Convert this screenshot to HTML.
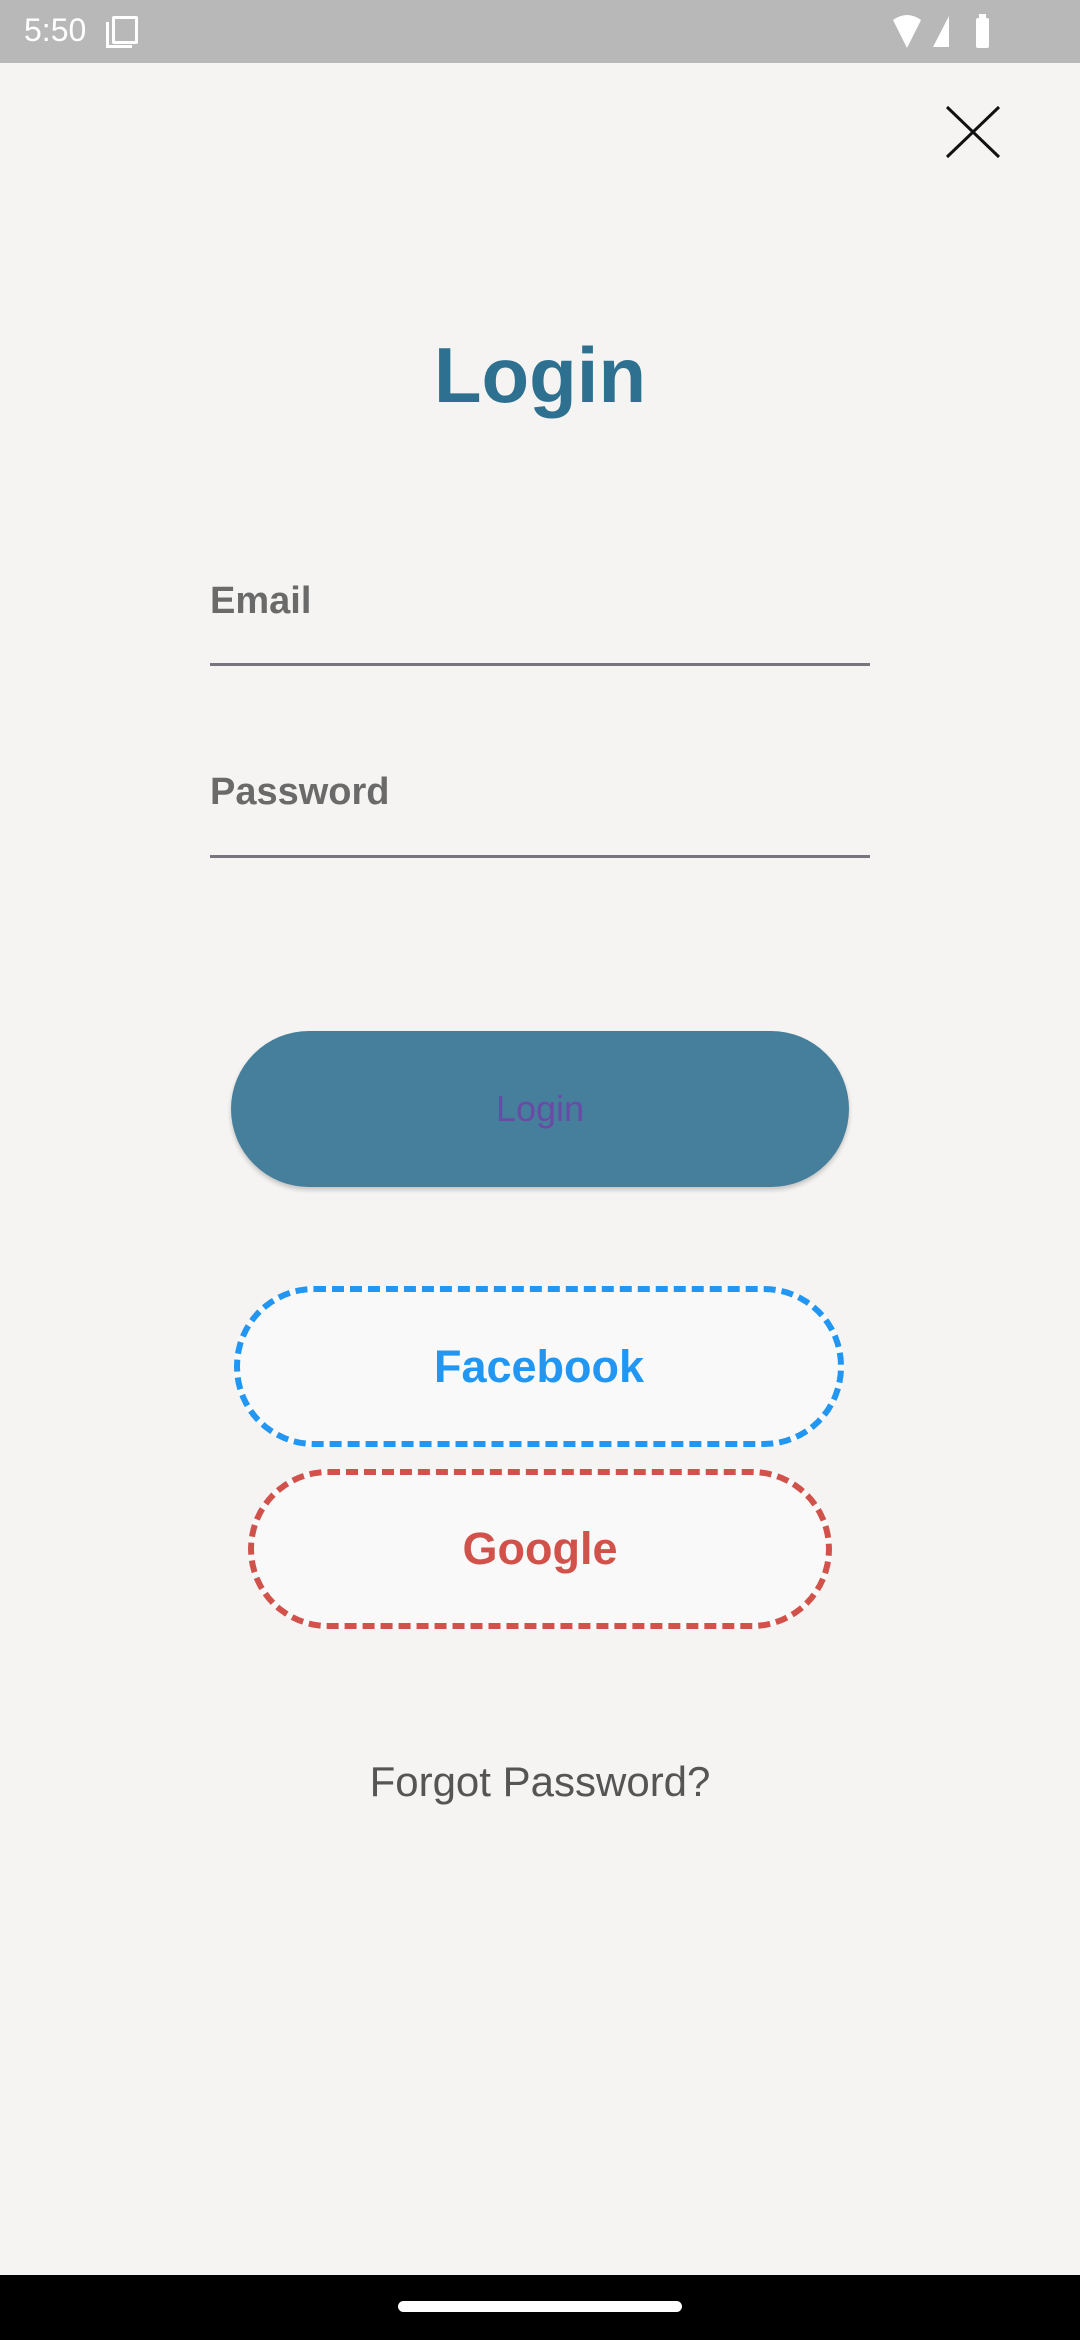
<!DOCTYPE html>
<html><head><meta charset="utf-8"><style>
*{margin:0;padding:0;box-sizing:border-box}
body{width:1080px;height:2340px;background:#f5f4f2;position:relative;overflow:hidden;font-family:"Liberation Sans",sans-serif}
.sb{position:absolute;left:0;top:0;width:1080px;height:63px;background:#b9b8b9;color:#fff}
.abs{position:absolute}
.lbl{position:absolute;left:210px;font-size:38px;color:#5c5c5c;font-weight:bold;opacity:.9}
.line{position:absolute;left:210px;width:660px;height:3px;background:#77767f}
.btn{position:absolute;border-radius:80px;display:flex;align-items:center;justify-content:center;font-weight:bold}
</style></head><body>
<div class="sb">
<div class="abs" style="left:24px;top:12px;font-size:32px">5:50</div>
<div class="abs" style="left:112px;top:16px;width:26px;height:28px;border:3px solid #fff;border-radius:2px"></div>
<div class="abs" style="left:106px;top:22px;width:26px;height:26px;border-left:3px solid #fff;border-bottom:3px solid #fff"></div>
<svg class="abs" style="left:885px;top:14px" width="120" height="36"><path d="M8 6 Q22 -4 36 6 L22 34 Z" fill="#fff"/><path d="M64 2 L64 33 L48 33 Z" fill="#fff"/><rect x="91" y="4" width="13" height="30" rx="2" fill="#fff"/><rect x="94" y="0" width="7" height="5" fill="#fff"/></svg>
</div>
<svg class="abs" style="left:944px;top:104px" width="58" height="56"><path d="M3 3 L55 53 M55 3 L3 53" stroke="#111" stroke-width="3"/></svg>
<div class="abs" style="left:0;width:1080px;top:330px;text-align:center;font-size:78px;font-weight:bold;color:#2e7090">Login</div>
<div class="lbl" style="top:580px">Email</div>
<div class="line" style="top:663px"></div>
<div class="lbl" style="top:771px">Password</div>
<div class="line" style="top:855px"></div>
<div class="btn" style="left:231px;top:1031px;width:618px;height:156px;background:#467f9b;color:#6a4aa6;font-size:36px;font-weight:normal;box-shadow:0 3px 5px rgba(0,0,0,.2)">Login</div>
<div class="btn" style="left:234px;top:1286px;width:610px;height:161px;background:#faf9f9;border:6px dashed #2196f3;color:#2196f3;font-size:45px">Facebook</div>
<div class="btn" style="left:248px;top:1469px;width:584px;height:160px;background:#faf9f9;border:6px dashed #d1524a;color:#d1524a;font-size:45px">Google</div>
<div class="abs" style="left:0;width:1080px;top:1758px;text-align:center;font-size:42px;color:#555">Forgot Password?</div>
<div class="abs" style="left:0;top:2275px;width:1080px;height:65px;background:#000"></div>
<div class="abs" style="left:398px;top:2301px;width:284px;height:11px;border-radius:6px;background:#fff"></div>
</body></html>
